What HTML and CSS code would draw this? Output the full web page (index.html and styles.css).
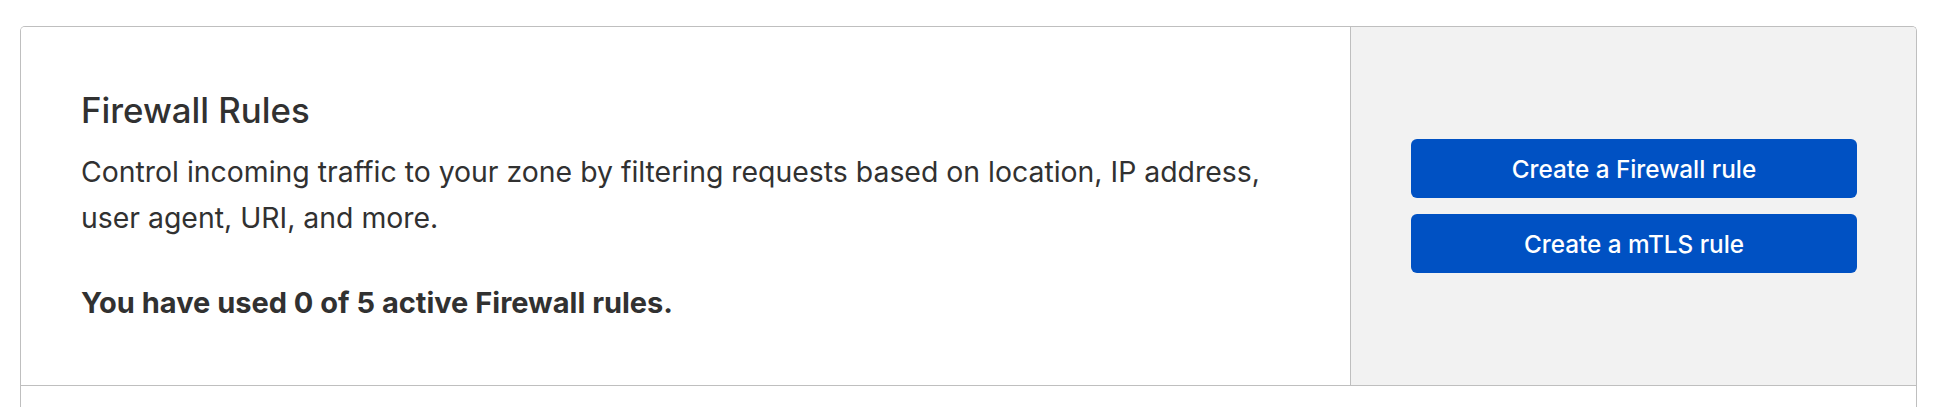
FILE: index.html
```html
<!DOCTYPE html>
<html lang="en">
<head>
<meta charset="utf-8">
<title>Firewall Rules</title>
<link rel="stylesheet" href="styles.css">
</head>
<body>
<div class="page">
  <section class="card">
    <div class="card-row">
      <div class="card-main">
        <h3 class="card-title">Firewall Rules</h3>
        <p class="card-desc">Control incoming traffic to your zone by filtering requests based on location, IP address, user agent, URI, and more.</p>
        <p class="card-usage">You have used 0 of 5 active Firewall rules.</p>
      </div>
      <div class="card-side">
        <button class="btn-primary" type="button">Create a Firewall rule</button>
        <button class="btn-primary" type="button">Create a mTLS rule</button>
      </div>
    </div>
    <div class="card-row-next"></div>
  </section>
</div>
</body>
</html>
```

FILE: styles.css
```css
html, body {
  margin: 0;
  padding: 0;
  background: #ffffff;
}

body {
  font-family: Inter, "Noto Sans", "Liberation Sans", sans-serif;
  color: #313131;
}

.page {
  padding: 26px 22px 0 20px;
}

.card {
  border: 1px solid #bfbfbf;
  border-bottom: none;
  border-radius: 5px 5px 0 0;
  overflow: hidden;
}

.card-row {
  display: grid;
  grid-template-columns: 1fr 566px;
  border-bottom: 1px solid #bfbfbf;
}

.card-main {
  padding: 60px 60px 59px 60px;
  background: #ffffff;
}

.card-title {
  margin: 0;
  font-size: 34.8px;
  line-height: 46px;
  font-weight: 500;
  color: #313131;
}

.card-desc {
  margin: 16px 0 0 0;
  font-size: 28.4px;
  line-height: 46px;
  font-weight: 400;
  color: #313131;
}

.card-usage {
  margin: 39px 0 0 0;
  font-size: 29px;
  line-height: 46px;
  font-weight: 700;
  color: #313131;
}

.card-side {
  background: #f2f2f2;
  border-left: 1px solid #bfbfbf;
  padding: 0 59px 0 60px;
  display: flex;
  flex-direction: column;
  justify-content: center;
  gap: 16px;
}

.btn-primary {
  display: block;
  width: 100%;
  height: 59px;
  border: none;
  border-radius: 6px;
  background: #0051c3;
  color: #ffffff;
  font-family: Inter, "Noto Sans", "Liberation Sans", sans-serif;
  font-size: 24.3px;
  font-weight: 500;
  cursor: pointer;
}

.card-row-next {
  height: 60px;
  background: #ffffff;
}
```
